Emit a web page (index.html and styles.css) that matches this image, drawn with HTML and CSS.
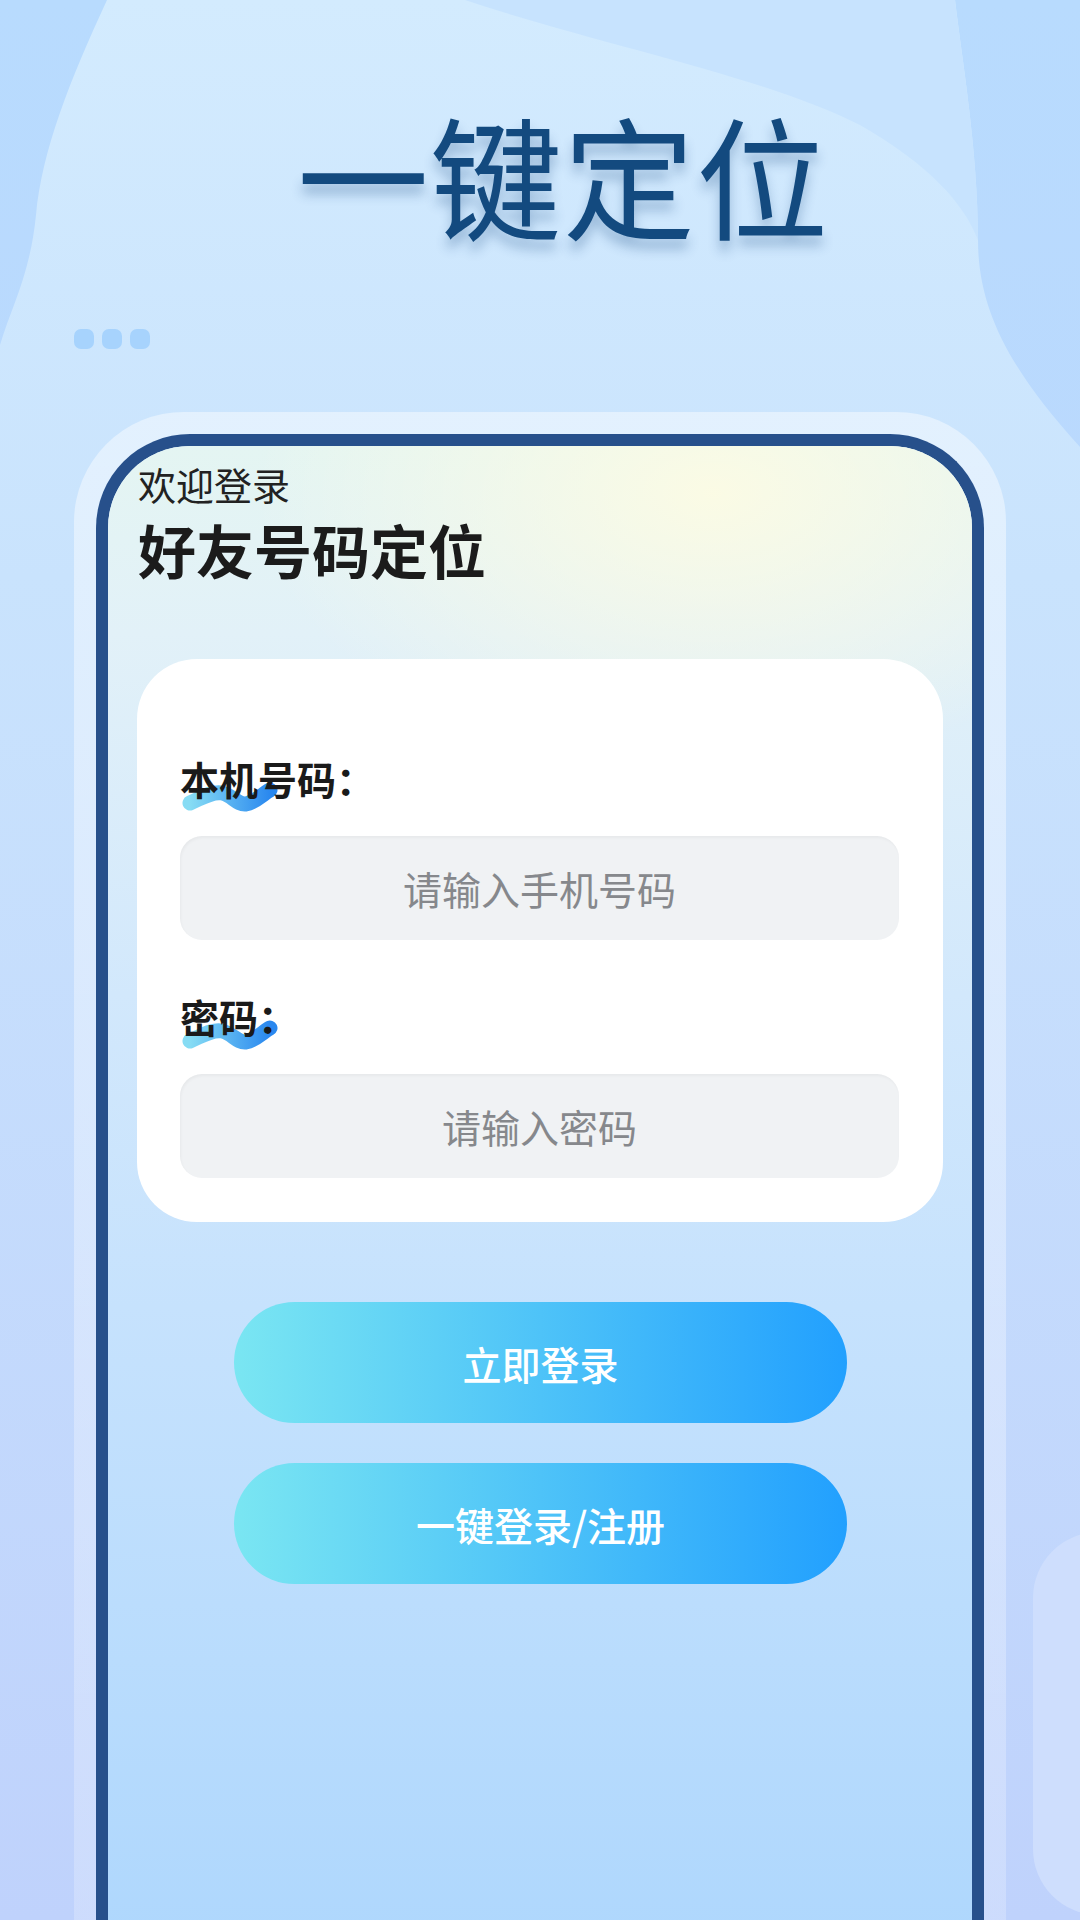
FILE: index.html
```html
<!DOCTYPE html>
<html lang="zh-CN">
<head>
  <meta charset="UTF-8" />
  <title>一键定位</title>
  <link rel="stylesheet" href="styles.css">
</head>
<body>
  <div class="page">
    <!-- decorative background shapes -->
    <svg class="backdrop" viewBox="0 0 1080 1920" aria-hidden="true">
      <defs>
        <linearGradient id="bgFill" x1="0" y1="0" x2="0" y2="1">
          <stop offset="0" stop-color="#b8dbfe"/>
          <stop offset="0.5" stop-color="#bcd7fd"/>
          <stop offset="1" stop-color="#b8cdfc"/>
        </linearGradient>
        <linearGradient id="blobFill" x1="0" y1="0" x2="0" y2="1">
          <stop offset="0" stop-color="#d3ebfe"/>
          <stop offset="0.3" stop-color="#c9e3fd"/>
          <stop offset="1" stop-color="#bfd2fc"/>
        </linearGradient>
      </defs>
      <rect width="1080" height="1920" fill="url(#bgFill)"/>
      <path d="M107 0 C70 80 42 150 36 215 C30 275 12 305 0 345 L0 1920 L1080 1920 L1080 447 C1010 370 978 310 978 240 C978 150 962 60 955 0 Z" fill="url(#blobFill)"/>
      <path d="M465 0 C600 45 760 75 860 125 C930 165 965 205 978 240 C978 150 962 60 955 0 Z" fill="#c7e3fe"/>
      <rect x="1033" y="1532" width="140" height="383" rx="66" fill="#cedefd"/>
    </svg>

    <h1 class="headline">一键定位</h1>

    <div class="dots"><span></span><span></span><span></span></div>

    <div class="phone">
      <div class="bezel">
        <div class="screen">
          <p class="welcome">欢迎登录</p>
          <h2 class="app-name">好友号码定位</h2>

          <form class="login-card">
            <label class="field-label" for="phoneInput">
              <svg class="brush" viewBox="0 0 96 32" aria-hidden="true">
                <defs>
                  <linearGradient id="brushA" x1="0" y1="0" x2="1" y2="0">
                    <stop offset="0" stop-color="#86dcf4"/>
                    <stop offset="1" stop-color="#2a88ef"/>
                  </linearGradient>
                </defs>
                <path d="M8 23 C20 18 30 11 40 13 C50 15 55 25 64 24 C74 22 82 13 88 10" fill="none" stroke="url(#brushA)" stroke-width="15" stroke-linecap="round" stroke-linejoin="round"/>
              </svg>
              <span>本机号码：</span>
            </label>
            <input class="field" id="phoneInput" type="tel" placeholder="请输入手机号码" />

            <label class="field-label" for="passwordInput">
              <svg class="brush" viewBox="0 0 96 32" aria-hidden="true">
                <defs>
                  <linearGradient id="brushB" x1="0" y1="0" x2="1" y2="0">
                    <stop offset="0" stop-color="#86dcf4"/>
                    <stop offset="1" stop-color="#2a88ef"/>
                  </linearGradient>
                </defs>
                <path d="M8 23 C20 18 30 11 40 13 C50 15 55 25 64 24 C74 22 82 13 88 10" fill="none" stroke="url(#brushB)" stroke-width="15" stroke-linecap="round" stroke-linejoin="round"/>
              </svg>
              <span>密码：</span>
            </label>
            <input class="field" id="passwordInput" type="password" placeholder="请输入密码" />
          </form>

          <div class="actions">
            <button class="btn" type="button">立即登录</button>
            <button class="btn" type="button">一键登录/注册</button>
          </div>
        </div>
      </div>
    </div>
  </div>
</body>
</html>
```

FILE: styles.css
```css
body {
  margin: 0;
  font-family: "Noto Sans CJK SC", "Noto Sans", sans-serif;
}
.page {
  position: relative;
  width: 1080px;
  height: 1920px;
  overflow: hidden;
  background: #c3ddfd;
}
.backdrop {
  position: absolute;
  top: 0;
  left: 0;
  width: 1080px;
  height: 1920px;
}
.headline {
  position: relative;
  margin: 0;
  padding: 107px 0 0 46px;
  text-align: center;
  font-size: 132px;
  line-height: 132px;
  font-weight: 400;
  letter-spacing: 1px;
  color: #134a7f;
  text-shadow: 0 10px 12px rgba(24, 74, 128, 0.3);
}
.dots {
  position: relative;
  display: flex;
  gap: 8px;
  margin: 90px 0 0 74px;
}
.dots span {
  width: 20px;
  height: 20px;
  border-radius: 7px;
  background: #a7d3fd;
}
.phone {
  position: relative;
  margin: 63px 0 0 74px;
  width: 932px;
  height: 1600px;
  box-sizing: border-box;
  padding: 22px 22px 0;
  border-radius: 110px 110px 0 0;
  background: linear-gradient(180deg, rgba(255,255,255,0.45), rgba(255,255,255,0.2));
}
.bezel {
  height: 100%;
  box-sizing: border-box;
  border: 12px solid #27508b;
  border-bottom: 0;
  border-radius: 94px 94px 0 0;
  overflow: hidden;
}
.screen {
  height: 100%;
  box-sizing: border-box;
  padding: 15px 29px 0 30px;
  background:
    radial-gradient(ellipse 460px 280px at 70% 3%, rgba(255,252,226,0.85), rgba(255,252,226,0)),
    linear-gradient(180deg, #e4f5f2 0%, #e2f1f8 12%, #d2e8fc 35%, #c6e2fd 55%, #acd6fd 100%);
}
.welcome {
  margin: 0;
  font-size: 38px;
  line-height: 46px;
  color: #222;
}
.app-name {
  margin: 7px 0 0;
  font-size: 58px;
  line-height: 70px;
  font-weight: 700;
  color: #1b1b1b;
}
.login-card {
  margin: 75px 0 0 -1px;
  width: 806px;
  box-sizing: border-box;
  padding: 95px 44px 44px 43px;
  border-radius: 60px;
  background: #fff;
}
.field-label {
  position: relative;
  display: block;
  font-size: 39px;
  line-height: 48px;
  font-weight: 700;
  color: #1a1a1a;
}
.field-label span {
  position: relative;
}
.brush {
  position: absolute;
  left: 2px;
  top: 26px;
  width: 96px;
  height: 32px;
}
.field {
  display: block;
  width: 100%;
  height: 104px;
  margin: 34px 0 0;
  box-sizing: border-box;
  border: 0;
  border-radius: 22px;
  background: #f0f2f4;
  box-shadow: inset 1px 2px 3px rgba(0,0,0,0.04);
  font: 39px "Noto Sans CJK SC", sans-serif;
  text-align: center;
  color: #333;
  outline: none;
}
.field::placeholder {
  color: #86888c;
}
.field + .field-label {
  margin-top: 52px;
}
.actions {
  display: flex;
  flex-direction: column;
  align-items: center;
  gap: 40px;
  margin-top: 80px;
}
.btn {
  width: 613px;
  height: 121px;
  border: 0;
  border-radius: 61px;
  background: linear-gradient(90deg, #7ae6f2 0%, #22a0fe 100%);
  color: #fff;
  font: 500 39px "Noto Sans CJK SC", sans-serif;
  cursor: pointer;
}
```
